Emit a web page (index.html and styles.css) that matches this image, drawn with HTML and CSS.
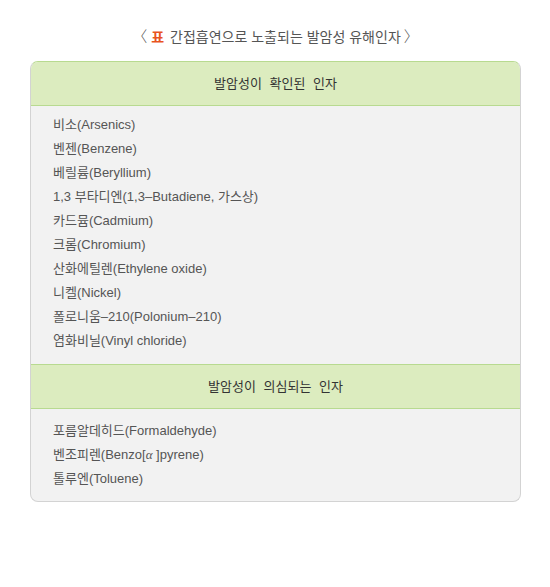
FILE: index.html
```html
<!DOCTYPE html>
<html lang="ko">
<head>
<meta charset="utf-8">
<link rel="stylesheet" href="styles.css">
</head>
<body>
<div class="page">
  <h2 class="title"><span class="br l">〈</span><span class="tag">표</span> 간접흡연으로 노출되는 발암성 유해인자<span class="br r">〉</span></h2>
  <div class="card">
    <div class="head first">발암성이 확인된 인자</div>
    <ul class="list one">
      <li>비소(Arsenics)</li>
      <li>벤젠(Benzene)</li>
      <li>베릴륨(Beryllium)</li>
      <li>1,3 부타디엔(1,3–Butadiene, 가스상)</li>
      <li>카드뮴(Cadmium)</li>
      <li>크롬(Chromium)</li>
      <li>산화에틸렌(Ethylene oxide)</li>
      <li>니켈(Nickel)</li>
      <li>폴로니움–210(Polonium–210)</li>
      <li>염화비닐(Vinyl chloride)</li>
    </ul>
    <div class="head">발암성이 의심되는 인자</div>
    <ul class="list two">
      <li>포름알데히드(Formaldehyde)</li>
      <li>벤조피렌(Benzo[<i>α</i> ]pyrene)</li>
      <li>톨루엔(Toluene)</li>
    </ul>
  </div>
</div>
</body>
</html>
```

FILE: styles.css
```css
html, body { margin: 0; padding: 0; background: #fff; }
body { font-family: "Liberation Sans", "Noto Sans CJK KR", sans-serif; }
.page { padding: 26px 29px 0 30px; width: 491px; }
.title {
  margin: 0 0 15px 0;
  text-align: center;
  font-size: 14px;
  font-weight: normal;
  color: #555;
  line-height: 20px;
  font-family: "Noto Sans CJK KR", sans-serif;
}
.title .br { color: #555; font-size: 15px; font-weight: 300; }
.title .br.r { margin-left: 3px; }
.title .tag { color: #e8541e; font-weight: bold; margin-left: 4px; margin-right: 2px; }
.card {
  border: 1px solid #d3d3d3;
  border-top-color: #b8da90;
  border-radius: 8px;
  background: #f2f2f2;
  overflow: hidden;
}
.head {
  background: #dcecbf;
  border-top: 1px solid #b8da90;
  border-bottom: 1px solid #b8da90;
  height: 43px;
  line-height: 43px;
  text-align: center;
  font-size: 13px;
  color: #333;
  word-spacing: 4px;
}
.head.first { border-top: none; }
.list {
  list-style: none;
  margin: 0;
  padding: 7px 0 11px 22px;
}
.list.two { padding: 10px 0 10px 22px; }
.list li {
  height: 24px;
  line-height: 24px;
  font-size: 13px;
  color: #555;
}
.list li i { font-family: "Liberation Serif", serif; }
```
